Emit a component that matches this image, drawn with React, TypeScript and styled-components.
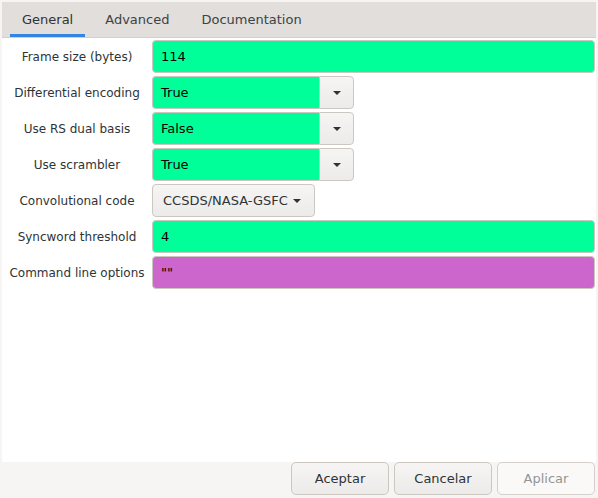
import React from 'react';
import styled, { createGlobalStyle } from 'styled-components';

const GlobalStyle = createGlobalStyle`
  html, body {
    margin: 0;
    padding: 0;
    background: #f6f5f4;
  }
  body {
    font-family: 'DejaVu Sans', sans-serif;
    color: #2e3436;
  }
`;

const INT_COLOR = '#00ff99';
const STRING_COLOR = '#cc66cc';

const Window = styled.div`
  width: 598px;
  height: 498px;
  display: flex;
  flex-direction: column;
  background: #f6f5f4;
`;

const Notebook = styled.div`
  flex: 1;
  margin: 2px 2px 0 2px;
  display: flex;
  flex-direction: column;
  background: #ffffff;
`;

const TabBar = styled.div`
  height: 35px;
  display: flex;
  gap: 8px;
  padding-left: 8px;
  background: #e1dedb;
  border-bottom: 1px solid #d3cfcb;
`;

const Tab = styled.div<{ $active?: boolean }>`
  display: flex;
  align-items: center;
  padding: 0 12px;
  font-size: 13px;
  color: ${({ $active }) => ($active ? '#2e3436' : '#3d4244')};
  box-shadow: ${({ $active }) => ($active ? 'inset 0 -3px 0 #3584e4' : 'none')};
`;

const Form = styled.div`
  display: grid;
  grid-template-columns: 150px 1fr;
  grid-auto-rows: 33px;
  row-gap: 3px;
  padding: 2px 1px 0 0;
`;

const Label = styled.div`
  display: flex;
  align-items: center;
  justify-content: center;
  font-size: 12px;
  color: #2e3436;
  white-space: nowrap;
`;

const Entry = styled.div<{ $color: string }>`
  display: flex;
  align-items: center;
  padding-left: 8px;
  background: ${({ $color }) => $color};
  border: 1px solid #cdc7c2;
  border-radius: 4px;
  font-size: 13px;
  color: #000000;
  box-sizing: border-box;
`;

const Combo = styled.div`
  display: flex;
  width: 202px;
  height: 33px;
`;

const ComboEntry = styled(Entry)`
  flex: 1;
  border-radius: 4px 0 0 4px;
  border-right: none;
`;

const ComboButton = styled.div`
  width: 35px;
  display: flex;
  align-items: center;
  justify-content: center;
  background: linear-gradient(#f6f5f4, #edebe9);
  border: 1px solid #cdc7c2;
  border-radius: 0 4px 4px 0;
  box-sizing: border-box;
`;

const Arrow = styled.span`
  width: 0;
  height: 0;
  border-left: 4.5px solid transparent;
  border-right: 4.5px solid transparent;
  border-top: 4.5px solid #2e3436;
`;

const MenuButton = styled.div`
  justify-self: start;
  display: flex;
  align-items: center;
  gap: 5px;
  padding: 0 10px;
  width: 163px;
  box-sizing: border-box;
  background: linear-gradient(#f6f5f4, #edebe9);
  border: 1px solid #cdc7c2;
  border-radius: 4px;
  font-size: 13px;
  color: #2e3436;
`;

const ButtonBar = styled.div`
  height: 36px;
  display: flex;
  justify-content: flex-end;
  gap: 5px;
  padding: 0 3px 3px 0;
  box-sizing: border-box;
`;

const DialogButton = styled.button<{ $disabled?: boolean }>`
  width: 98px;
  height: 33px;
  font-family: 'DejaVu Sans', sans-serif;
  font-size: 13px;
  color: ${({ $disabled }) => ($disabled ? '#929595' : '#2e3436')};
  background: ${({ $disabled }) => ($disabled ? '#faf9f8' : 'linear-gradient(#f6f5f4, #edebe9)')};
  border: 1px solid ${({ $disabled }) => ($disabled ? '#d5d0cc' : '#cdc7c2')};
  border-radius: 5px;
  padding: 0;
`;

type Field =
  | { kind: 'entry'; label: string; value: string; color: string }
  | { kind: 'combo'; label: string; value: string }
  | { kind: 'menu'; label: string; value: string };

const fields: Field[] = [
  { kind: 'entry', label: 'Frame size (bytes)', value: '114', color: INT_COLOR },
  { kind: 'combo', label: 'Differential encoding', value: 'True' },
  { kind: 'combo', label: 'Use RS dual basis', value: 'False' },
  { kind: 'combo', label: 'Use scrambler', value: 'True' },
  { kind: 'menu', label: 'Convolutional code', value: 'CCSDS/NASA-GSFC' },
  { kind: 'entry', label: 'Syncword threshold', value: '4', color: INT_COLOR },
  { kind: 'entry', label: 'Command line options', value: '""', color: STRING_COLOR },
];

const App: React.FC = () => {
  return (
    <Window>
      <GlobalStyle />
      <Notebook>
        <TabBar>
          <Tab $active>General</Tab>
          <Tab>Advanced</Tab>
          <Tab>Documentation</Tab>
        </TabBar>
        <Form>
          {fields.map((f) => (
            <React.Fragment key={f.label}>
              <Label>{f.label}</Label>
              {f.kind === 'entry' && <Entry $color={f.color}>{f.value}</Entry>}
              {f.kind === 'combo' && (
                <Combo>
                  <ComboEntry $color={INT_COLOR}>{f.value}</ComboEntry>
                  <ComboButton>
                    <Arrow />
                  </ComboButton>
                </Combo>
              )}
              {f.kind === 'menu' && (
                <MenuButton>
                  {f.value}
                  <Arrow />
                </MenuButton>
              )}
            </React.Fragment>
          ))}
        </Form>
      </Notebook>
      <ButtonBar>
        <DialogButton>Aceptar</DialogButton>
        <DialogButton>Cancelar</DialogButton>
        <DialogButton $disabled>Aplicar</DialogButton>
      </ButtonBar>
    </Window>
  );
};

export default App;
